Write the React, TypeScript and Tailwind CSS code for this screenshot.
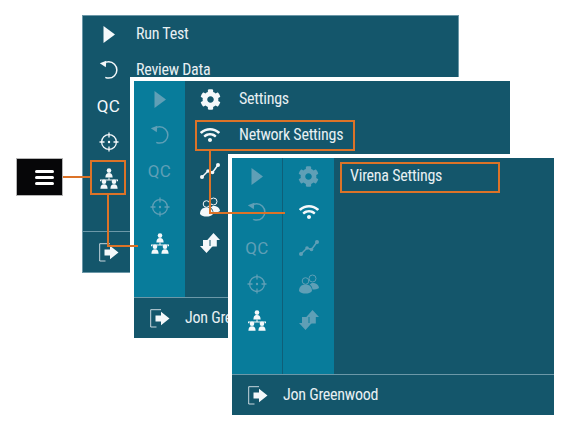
import React from 'react';
import { FaCog, FaWifi } from 'react-icons/fa';

const ICON_BRIGHT = 'text-[#f4f8fa]';
const ICON_DIM = 'text-[#5f9fb6]';

function PlayIcon() {
  return (
    <svg width="12" height="17" viewBox="0 0 12 17" fill="currentColor">
      <path d="M0.500 0 12 8.500 0.500 17z" />
    </svg>
  );
}

function UndoIcon() {
  return (
    <svg width="20" height="20" viewBox="0 0 20 20" fill="none">
      <path d="M5 3.200C6.500 2.200 8 1.800 9.700 1.800a8.100 8.100 0 0 1 0 16.300c-1.300 0-2.400-.3-3.400-.8" stroke="currentColor" strokeWidth="1.500" />
      <path d="M0.800 3.300 7.300 0.800 6.800 7.300z" fill="currentColor" />
    </svg>
  );
}

function TargetIcon() {
  return (
    <svg width="20" height="20" viewBox="0 0 20 20" fill="none" stroke="currentColor" strokeWidth="1.300">
      <circle cx="10" cy="10" r="7.400" />
      <path d="M10 0.500V5.500M10 14.500V19.500M0.500 10H5.500M14.500 10H19.500" />
      <circle cx="10" cy="10" r="1.200" fill="currentColor" stroke="none" />
    </svg>
  );
}

function Person({ x, y }: { x: number; y: number }) {
  return (
    <g>
      <circle cx={x} cy={y} r="2.300" />
      <path d={`M${x - 3.600} ${y + 7}c0-3.400 1.400-4.600 3.600-4.600s3.600 1.200 3.600 4.600z`} />
    </g>
  );
}

function HierarchyIcon() {
  return (
    <svg width="20" height="21" viewBox="0 0 20 21" fill="currentColor">
      <Person x={10} y={2.600} />
      <path d="M9.500 9.500h1v2h8.500v1.800h-1v-.8H2v.8H1v-1.800h8.500z" />
      <Person x={5} y={13.800} />
      <Person x={15} y={13.800} />
    </svg>
  );
}

function ChartIcon() {
  return (
    <svg width="20" height="18" viewBox="0 0 20 18" fill="currentColor" stroke="currentColor">
      <path d="M2 15 8 9 l4.500 1.500L18 3" fill="none" strokeWidth="1.500" />
      <circle cx="2" cy="15" r="2" stroke="none" />
      <circle cx="8" cy="9" r="1.800" stroke="none" />
      <circle cx="12.500" cy="10.500" r="1.800" stroke="none" />
      <circle cx="18" cy="3" r="2" stroke="none" />
    </svg>
  );
}

function GroupIcon() {
  return (
    <svg width="20" height="20" viewBox="0 0 20 20" fill="currentColor">
      <circle cx="13.500" cy="4.500" r="3.500" fill="none" stroke="currentColor" strokeWidth="1" />
      <circle cx="6.500" cy="7" r="3.300" fill="none" stroke="currentColor" strokeWidth="1" />
      <path d="M0 17c0-4.500 3-6.500 6.500-6.500s6.500 2 6.500 6.500c-1.500 1.800-3.800 2.600-6.500 2.600S1.500 18.800 0 17z" />
      <path d="M13.500 15.500c-.2-2.200-1.200-4-2.800-5 .7-.8 1.700-1.500 3-1.500 3.300 0 6 1.800 6.300 5-1.500 1-4 1.500-6.500 1.500z" />
    </svg>
  );
}

function TransferIcon() {
  return (
    <svg width="20" height="20" viewBox="0 0 20 20" fill="currentColor">
      <path d="M13.500 0 20 7H16.800V13.500H10.500V7H7.300z" />
      <path d="M6.500 20 0 13H3V7H9.500V13H12.800z" />
    </svg>
  );
}

function ExitIcon() {
  return (
    <svg width="20" height="19" viewBox="0 0 20 19" fill="none">
      <path d="M11 0.700H0.700V18H6.500" stroke="currentColor" strokeWidth="1" opacity="0.8" />
      <path d="M5.500 6.500H11V2.800L19.500 9.500 11 16.200V12.500H5.500z" fill="currentColor" />
    </svg>
  );
}

function QcIcon() {
  return <span className="text-[17px] leading-none tracking-[0.3px] [font-family:Roboto,sans-serif]">QC</span>;
}

const mainIcons = [
  <PlayIcon key="play" />,
  <UndoIcon key="undo" />,
  <QcIcon key="qc" />,
  <TargetIcon key="target" />,
  <HierarchyIcon key="net" />,
];

const settingsIcons = [
  <FaCog key="cog" size={21} />,
  <FaWifi key="wifi" size={20} />,
  <ChartIcon key="chart" />,
  <GroupIcon key="group" />,
  <TransferIcon key="transfer" />,
];

function IconCell({ bright, children }: { bright: boolean; children: React.ReactNode }) {
  return (
    <div className={`h-9 flex items-center justify-center ${bright ? ICON_BRIGHT : ICON_DIM}`}>
      {children}
    </div>
  );
}

function Label({ children }: { children: React.ReactNode }) {
  return <div className="h-9 flex items-center pb-[1px] text-[#e8f0f3] text-[16px] tracking-[-0.25px] whitespace-nowrap">{children}</div>;
}

function Footer({ name }: { name?: string }) {
  return (
    <div className="h-[41px] shrink-0 flex items-center border-t border-[#6c98a8] bg-[#14566b] text-[#e8f0f3]">
      <div className="w-[51px] flex justify-center shrink-0 text-[#f4f8fa]">
        <ExitIcon />
      </div>
      {name && <span className="text-[16px] tracking-[-0.25px] whitespace-nowrap">{name}</span>}
    </div>
  );
}

export default function App() {
  return (
    <div
      className="relative w-[578px] h-[429px] overflow-hidden bg-white"
      style={{ fontFamily: '"Roboto Condensed", "Liberation Sans Narrow", Roboto, sans-serif' }}
    >
      {/* Hamburger button */}
      <div className="absolute left-[16px] top-[158px] w-[47px] h-[38px] bg-[#060608] border border-[#b5b5b5] flex flex-col items-center justify-center gap-[3px] pl-[9px]">
        <span className="w-[19px] h-[3px] rounded-full bg-white" />
        <span className="w-[19px] h-[3px] rounded-full bg-white" />
        <span className="w-[19px] h-[3px] rounded-full bg-white" />
      </div>

      {/* Main menu */}
      <div className="absolute left-[82px] top-[15px] w-[377px] h-[258px] flex flex-col bg-[#14566b] border border-[#6c98a8]">
        <div className="flex-1 flex min-h-0">
          <div className="w-[51px] shrink-0">
            {mainIcons.map((icon, i) => (
              <IconCell key={i} bright>{icon}</IconCell>
            ))}
          </div>
          <div className="pl-[2px]">
            <Label>Run Test</Label>
            <Label>Review Data</Label>
          </div>
        </div>
        <Footer />
      </div>

      {/* Settings menu */}
      <div className="absolute left-[130px] top-[77px] w-[380px] h-[261px] flex flex-col border-4 border-white border-b-0 border-r-0 bg-[#14566b]">
        <div className="flex-1 flex min-h-0">
          <div className="w-[51px] shrink-0 bg-[#087c9b]">
            {mainIcons.map((icon, i) => (
              <IconCell key={i} bright={i === 4}>{icon}</IconCell>
            ))}
          </div>
          <div className="w-[50px] shrink-0">
            {settingsIcons.map((icon, i) => (
              <IconCell key={i} bright>{icon}</IconCell>
            ))}
          </div>
          <div className="pl-[4px]">
            <Label>Settings</Label>
            <Label>Network Settings</Label>
          </div>
        </div>
        <Footer name="Jon Greenwood" />
      </div>

      {/* Virena menu */}
      <div className="absolute left-[228px] top-[154px] w-[326px] h-[261px] flex flex-col border-4 border-white border-r-0 border-b-0 bg-[#14566b]">
        <div className="flex-1 flex min-h-0">
          <div className="w-[51px] shrink-0 bg-[#087c9b] border-r border-[#0f5f78]">
            {mainIcons.map((icon, i) => (
              <IconCell key={i} bright={i === 4}>{icon}</IconCell>
            ))}
          </div>
          <div className="w-[51px] shrink-0 bg-[#087c9b]">
            {settingsIcons.map((icon, i) => (
              <IconCell key={i} bright={i === 1}>{icon}</IconCell>
            ))}
          </div>
          <div className="pl-[16px]">
            <Label>Virena Settings</Label>
          </div>
        </div>
        <Footer name="Jon Greenwood" />
      </div>

      {/* Callout boxes and connectors */}
      <div className="absolute left-[90px] top-[160px] w-[36px] h-[35px] border-2 border-[#dc7328]" />
      <div className="absolute left-[195px] top-[120px] w-[160px] h-[31px] border-2 border-[#dc7328]" />
      <div className="absolute left-[340px] top-[162px] w-[160px] h-[31px] border-2 border-[#dc7328]" />
      <div className="absolute left-[63px] top-[176px] w-[27px] h-[2px] bg-[#dc7328]" />
      <div className="absolute left-[107px] top-[195px] w-[2px] h-[52px] bg-[#dc7328]" />
      <div className="absolute left-[107px] top-[245px] w-[31px] h-[2px] bg-[#dc7328]" />
      <div className="absolute left-[209px] top-[151px] w-[2px] h-[62px] bg-[#dc7328]" />
      <div className="absolute left-[209px] top-[212px] w-[76px] h-[2px] bg-[#dc7328]" />
    </div>
  );
}
